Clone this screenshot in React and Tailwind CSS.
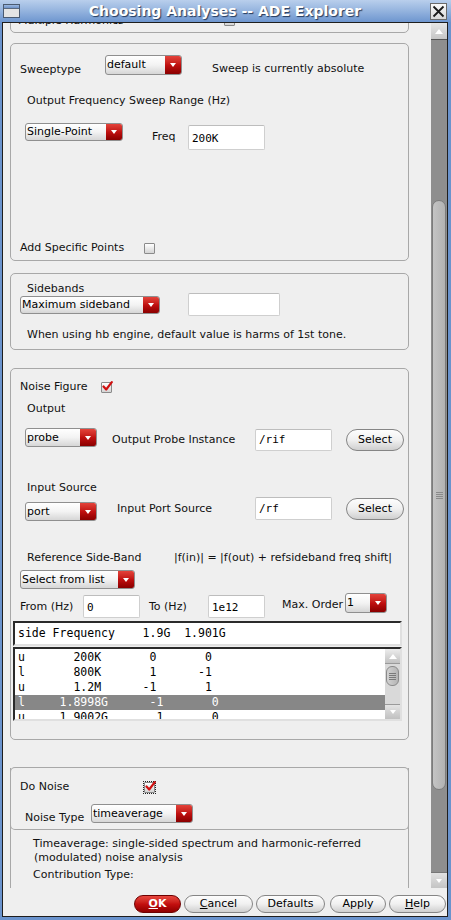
import React from "react";

const TriDown = () => (
  <span className="block w-0 h-0 border-l-[3.5px] border-r-[3.5px] border-t-[4px] border-l-transparent border-r-transparent border-t-white" />
);
const TriUp = () => (
  <span className="block w-0 h-0 border-l-[4px] border-r-[4px] border-b-[5px] border-l-transparent border-r-transparent border-b-white" />
);

function Dropdown({ cls, label }) {
  return (
    <div
      className={`flex shrink-0 rounded-[3px] border border-[#8f8f8f] overflow-hidden bg-linear-to-b from-white via-[#f3f3f3] to-[#d6d6d6] ${cls}`}
    >
      <div className="flex-1 pl-[1px] whitespace-nowrap overflow-hidden flex items-center text-black">
        {label}
      </div>
      <div className="w-[16px] bg-linear-to-b from-[#e4423a] via-[#c01010] to-[#8a0000] flex items-center justify-center">
        <TriDown />
      </div>
    </div>
  );
}

function Check({ checked, focus }) {
  return (
    <div
      className={`relative shrink-0 w-[11px] h-[11px] ${
        focus ? "outline outline-1 outline-dotted outline-[#222]" : ""
      }`}
    >
      <div className="w-[11px] h-[11px] border border-[#8a8a8a] rounded-[1px] bg-linear-to-b from-white to-[#d4d4d4]" />
      {checked && (
        <svg
          className="absolute left-[1px] top-[-1px]"
          width="11"
          height="11"
          viewBox="0 0 11 11"
        >
          <path
            d="M1.5 5.5 L4.2 8.5 L9.8 1.2"
            fill="none"
            stroke="#d01010"
            strokeWidth="2.2"
            strokeLinecap="round"
            strokeLinejoin="round"
          />
        </svg>
      )}
    </div>
  );
}

function Input({ cls, value }) {
  return (
    <div
      className={`shrink-0 bg-white border border-[#cfcfcf] border-t-[#bdbdbd] rounded-[2px] flex items-center pl-[3px] font-['DejaVu_Sans_Mono',monospace] text-[11px] text-black ${cls}`}
    >
      {value}
    </div>
  );
}

function PillButton({ cls, children }) {
  return (
    <div
      className={`shrink-0 rounded-full border border-[#858585] bg-linear-to-b from-[#fdfdfd] via-[#f0f0f0] to-[#cfcfcf] flex items-center justify-center text-black ${cls}`}
    >
      {children}
    </div>
  );
}

function TitleBar() {
  return (
    <div className="h-[22px] shrink-0 flex items-center bg-linear-to-b from-[#b9cfec] via-[#94b3de] to-[#6e96cf]">
      <div className="ml-[3px] w-[17px] h-[14px] border border-[#4a5a70] bg-[#e4e4e4] flex flex-col">
        <div className="h-[4px] bg-linear-to-b from-[#9bb8e0] to-[#6e92c8] border-b border-[#5a6a80]" />
      </div>
      <div className="flex-1 text-center text-white font-bold text-[14px] leading-[18px] [text-shadow:1px_1px_1px_#243a5c]">
        Choosing Analyses -- ADE Explorer
      </div>
      <div className="mr-[4px] w-[17px] h-[17px] border border-[#6b6b6b] bg-linear-to-b from-[#fafafa] to-[#d8d8d8] flex items-center justify-center">
        <svg width="13" height="13" viewBox="0 0 13 13">
          <path d="M1.5 1.5 L11.5 11.5 M11.5 1.5 L1.5 11.5" stroke="#1a1a1a" strokeWidth="1.8" />
        </svg>
      </div>
    </div>
  );
}

function MainScrollbar() {
  return (
    <div className="w-[16px] shrink-0 flex flex-col bg-[#8e8e8e]">
      <div className="h-[17px] shrink-0 bg-linear-to-b from-[#e6e6e6] to-[#c6c6c6] border-b border-[#555] flex items-center justify-center">
        <TriUp />
      </div>
      <div className="h-[160px] shrink-0" />
      <div className="h-[590px] shrink-0 mx-[1px] rounded-[7px] border border-[#7c7c7c] bg-linear-to-r from-[#c4c4c4] to-[#b2b2b2] flex flex-col items-center justify-center gap-[1px]">
        <div className="w-[7px] h-[1px] bg-[#8a8a8a]" />
        <div className="w-[7px] h-[1px] bg-[#8a8a8a]" />
        <div className="w-[7px] h-[1px] bg-[#8a8a8a]" />
        <div className="w-[7px] h-[1px] bg-[#8a8a8a]" />
      </div>
      <div className="flex-1" />
      <div className="h-[16px] shrink-0 bg-linear-to-b from-[#e2e2e2] to-[#c4c4c4] border-t border-[#777] flex items-center justify-center">
        <TriDown />
      </div>
    </div>
  );
}

function ListScrollbar() {
  return (
    <div className="w-[15px] shrink-0 flex flex-col bg-[#d9d9d9]">
      <div className="h-[15px] shrink-0 bg-linear-to-b from-[#ededed] to-[#c2c2c2] border-b border-[#9a9a9a] flex items-center justify-center">
        <TriUp />
      </div>
      <div className="mt-[2px] mx-[1px] h-[20px] shrink-0 rounded-[6px] border border-[#8a8a8a] bg-linear-to-r from-[#d2d2d2] to-[#b4b4b4] flex flex-col items-center justify-center gap-[1px]">
        <div className="w-[7px] h-[1px] bg-[#7a7a7a]" />
        <div className="w-[7px] h-[1px] bg-[#7a7a7a]" />
        <div className="w-[7px] h-[1px] bg-[#7a7a7a]" />
        <div className="w-[7px] h-[1px] bg-[#7a7a7a]" />
      </div>
      <div className="flex-1" />
      <div className="h-[15px] shrink-0 bg-linear-to-b from-[#e4e4e4] to-[#c0c0c0] border-t border-[#9a9a9a] flex items-center justify-center">
        <TriDown />
      </div>
    </div>
  );
}

const rows = [
  { t: "u       200K       0       0" },
  { t: "l       800K       1      -1" },
  { t: "u       1.2M      -1       1" },
  { t: "l     1.8998G      -1       0", sel: true },
  { t: "u     1.9002G       1       0" },
];

function ButtonBar() {
  return (
    <div className="h-[28px] shrink-0 flex justify-end items-start pt-[7px] pr-[1px]">
      <div className="w-[47px] h-[18px] shrink-0 rounded-full border border-[#6e0000] bg-linear-to-b from-[#e8463e] via-[#c41010] to-[#900000] flex items-center justify-center text-white font-bold">
        <span>
          <span className="underline">O</span>K
        </span>
      </div>
      <PillButton cls="ml-[3px] w-[69px] h-[18px]">
        <span>
          <span className="underline">C</span>ancel
        </span>
      </PillButton>
      <PillButton cls="ml-[3px] w-[69px] h-[18px]">Defaults</PillButton>
      <PillButton cls="ml-[5px] w-[56px] h-[18px]">Apply</PillButton>
      <PillButton cls="ml-[3px] w-[57px] h-[18px]">
        <span>
          <span className="underline">H</span>elp
        </span>
      </PillButton>
    </div>
  );
}

export default function App() {
  return (
    <div className="w-[451px] h-[920px] bg-[#6a93cd] flex flex-col overflow-hidden font-['DejaVu_Sans',sans-serif] text-[11px] leading-[14px] text-[#111]">
      <TitleBar />
      <div className="flex-1 min-h-0 ml-[2px] mr-[3px] mb-[3px] border border-[#1e1e1e] bg-[#efefef] flex flex-col">
        <div className="flex-1 min-h-0 flex">
          <div className="flex-1 min-w-0 overflow-hidden flex flex-col">
            {/* Group 1 (cut off) */}
            <div className="-mt-[20px] ml-[7px] w-[399px] h-[30px] shrink-0 border border-[#a8a8a8] rounded-[5px] flex pl-[7px]">
              <div className="w-[206px] mt-[10px]">Multiple Harmonics</div>
              <div className="mt-[11px]">
                <Check />
              </div>
            </div>

            {/* Group 2 */}
            <div className="mt-[10px] ml-[7px] w-[399px] h-[218px] shrink-0 border border-[#a8a8a8] rounded-[5px] flex flex-col">
              <div className="mt-[11px] flex items-start pl-[9px]">
                <div className="w-[85px] mt-[8px]">Sweeptype</div>
                <Dropdown cls="w-[77px] h-[20px]" label="default" />
                <div className="ml-[30px] mt-[7px]">Sweep is currently absolute</div>
              </div>
              <div className="mt-[17px] pl-[16px]">Output Frequency Sweep Range (Hz)</div>
              <div className="mt-[15px] flex items-start pl-[14px]">
                <Dropdown cls="w-[98px] h-[18px]" label="Single-Point" />
                <div className="ml-[29px] w-[36px] mt-[7px]">Freq</div>
                <Input cls="w-[77px] h-[25px] mt-[2px] pt-[3px]" value="200K" />
              </div>
              <div className="mt-auto mb-[5px] flex items-center pl-[9px]">
                <div className="w-[124px]">Add Specific Points</div>
                <Check />
              </div>
            </div>

            {/* Group 3 */}
            <div className="mt-[12px] ml-[7px] w-[399px] h-[77px] shrink-0 border border-[#a8a8a8] rounded-[5px] flex flex-col">
              <div className="mt-[8px] pl-[16px]">Sidebands</div>
              <div className="-mt-[3px] flex items-start pl-[9px]">
                <Dropdown cls="w-[140px] h-[18px] mt-[3px]" label="Maximum sideband" />
                <Input cls="ml-[28px] w-[92px] h-[23px]" value="" />
              </div>
              <div className="mt-[12px] pl-[16px]">
                When using hb engine, default value is harms of 1st tone.
              </div>
            </div>

            {/* Group 4 */}
            <div className="mt-[18px] ml-[7px] w-[399px] h-[372px] shrink-0 border border-[#a8a8a8] rounded-[5px] flex flex-col">
              <div className="mt-[11px] flex items-center pl-[9px]">
                <div className="w-[81px]">Noise Figure</div>
                <Check checked />
              </div>
              <div className="mt-[8px] pl-[16px]">Output</div>
              <div className="mt-[12px] flex items-start pl-[14px]">
                <Dropdown cls="w-[72px] h-[19px]" label="probe" />
                <div className="ml-[15px] w-[143px] mt-[5px]">Output Probe Instance</div>
                <Input cls="w-[77px] h-[22px] mt-[1px]" value="/rif" />
                <PillButton cls="ml-[14px] w-[58px] h-[22px] mt-[1px]">Select</PillButton>
              </div>
              <div className="mt-[30px] pl-[16px]">Input Source</div>
              <div className="mt-[2px] flex items-start pl-[14px]">
                <Dropdown cls="w-[72px] h-[19px] mt-[5px]" label="port" />
                <div className="ml-[20px] w-[138px] mt-[5px]">Input Port Source</div>
                <Input cls="w-[77px] h-[23px]" value="/rf" />
                <PillButton cls="ml-[14px] w-[58px] h-[22px] mt-[1px]">Select</PillButton>
              </div>
              <div className="mt-[30px] flex pl-[16px]">
                <div className="w-[147px]">Reference Side-Band</div>
                <div>|f(in)| = |f(out) + refsideband freq shift|</div>
              </div>
              <div className="mt-[5px] pl-[9px] flex">
                <Dropdown cls="w-[115px] h-[19px]" label="Select from list" />
              </div>
              <div className="mt-[4px] flex items-start pl-[9px]">
                <div className="w-[63px] mt-[7px]">From (Hz)</div>
                <Input cls="w-[57px] h-[23px] mt-[2px] pt-[2px]" value="0" />
                <div className="ml-[9px] w-[59px] mt-[7px]">To (Hz)</div>
                <Input cls="w-[57px] h-[23px] mt-[2px] pt-[2px]" value="1e12" />
                <div className="ml-[17px] w-[63px] mt-[5px]">Max. Order</div>
                <Dropdown cls="w-[42px] h-[20px]" label="1" />
              </div>
              <div className="mt-[3px] ml-[2px] w-[389px] h-[25px] shrink-0 bg-white border-2 border-[#2a2a2a] border-r-[#e0e0e0] border-b-[#e0e0e0] pl-[3px] pt-[3px] font-['DejaVu_Sans_Mono',monospace] text-[11.5px] whitespace-pre text-black">
                {"side Frequency    1.9G  1.901G"}
              </div>
              <div className="mt-[1px] ml-[2px] w-[389px] h-[74px] shrink-0 bg-white border-2 border-[#2a2a2a] border-r-[#e0e0e0] border-b-[#e0e0e0] flex overflow-hidden">
                <div className="flex-1 min-w-0 pt-[1px] font-['DejaVu_Sans_Mono',monospace] text-[11.5px] leading-[15px] whitespace-pre overflow-hidden">
                  {rows.map((r, i) => (
                    <div
                      key={i}
                      className={`h-[15px] pl-[3px] ${r.sel ? "bg-[#878787] text-white" : "text-black"}`}
                    >
                      {r.t}
                    </div>
                  ))}
                </div>
                <ListScrollbar />
              </div>
            </div>

            {/* Group 5 */}
            <div className="mt-[27px] ml-[7px] w-[399px] shrink-0 border border-b-0 border-[#a8a8a8] rounded-t-[5px] flex flex-col pb-[40px]">
              <div className="-mx-[1px] border-b border-l border-r border-[#a8a8a8] rounded-b-[5px] pb-[4px] flex flex-col">
                <div className="mt-[12px] flex items-center pl-[9px]">
                  <div className="w-[124px]">Do Noise</div>
                  <Check checked focus />
                </div>
                <div className="mt-[10px] flex items-start pl-[14px]">
                  <div className="w-[66px] mt-[7px]">Noise Type</div>
                  <Dropdown cls="w-[102px] h-[19px]" label="timeaverage" />
                </div>
              </div>
              <div className="mt-[7px] pl-[22px]">
                Timeaverage: single-sided spectrum and harmonic-referred
              </div>
              <div className="pl-[23px]">(modulated) noise analysis</div>
              <div className="mt-[3px] pl-[22px]">Contribution Type:</div>
            </div>
          </div>
          <MainScrollbar />
        </div>
        <ButtonBar />
      </div>
    </div>
  );
}
